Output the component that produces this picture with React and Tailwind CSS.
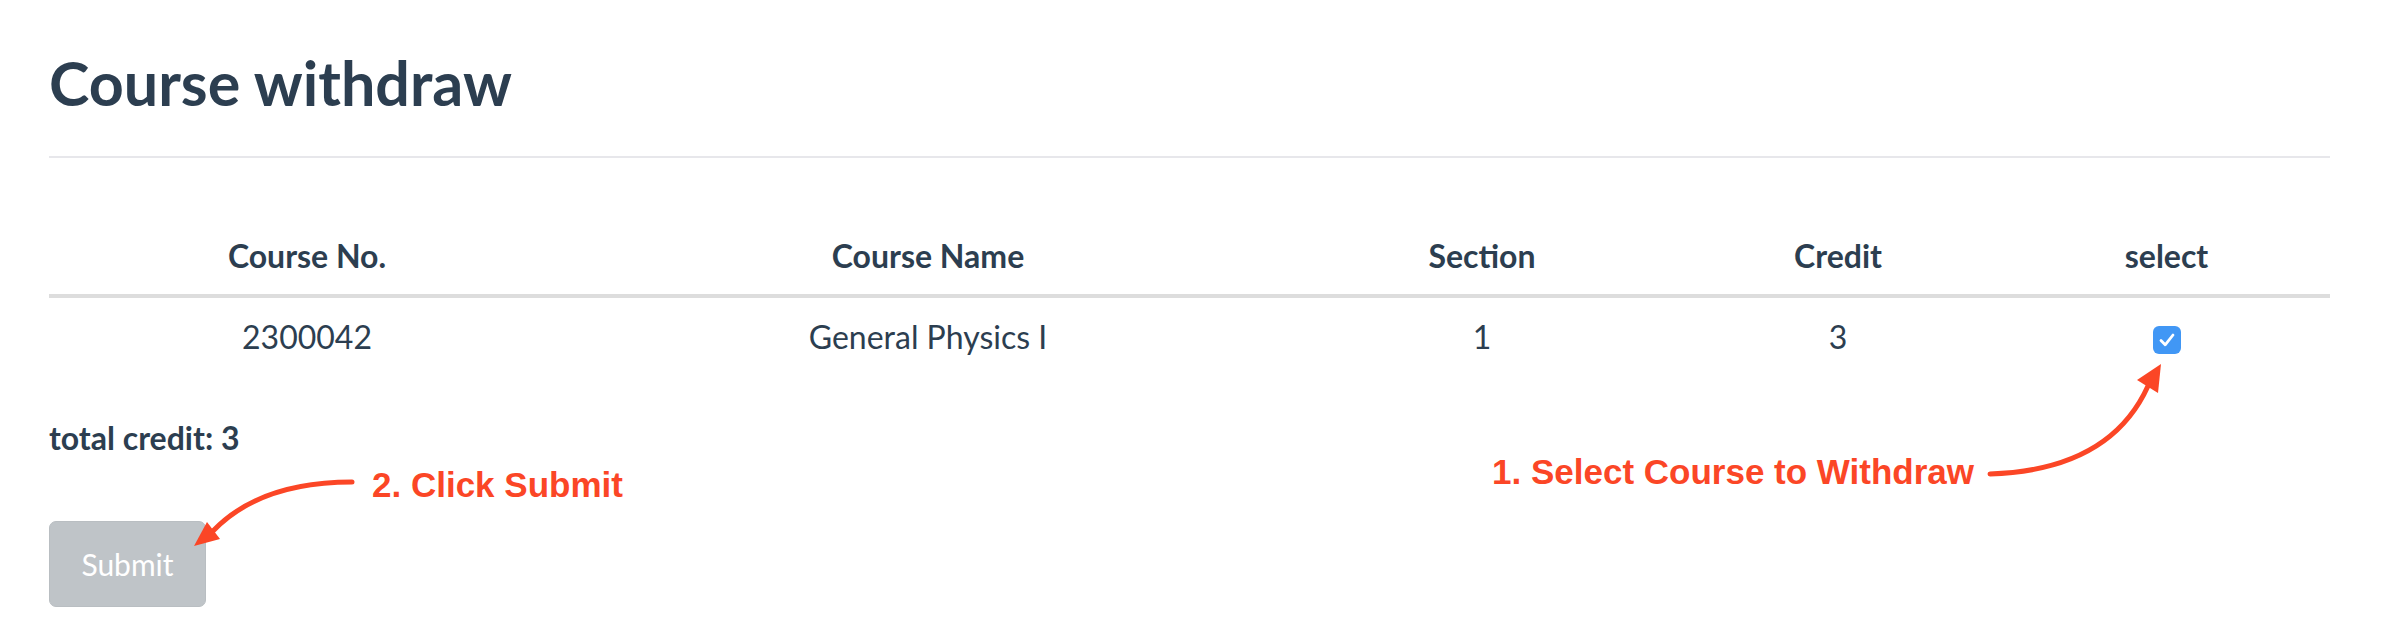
import React from 'react';

const columns = [
  { label: 'Course No.', width: 'w-[516px]' },
  { label: 'Course Name', width: 'w-[726px]' },
  { label: 'Section', width: 'w-[382px]' },
  { label: 'Credit', width: 'w-[330px]' },
  { label: 'select', width: 'w-[327px]' },
];

const rows = [{ no: '2300042', name: 'General Physics I', section: '1', credit: '3', selected: true }];

const Checkbox = ({ checked }) => (
  <div className="inline-flex w-[28px] h-[28px] rounded-[6px] bg-[#4197f5] items-center justify-center align-middle">
    {checked && (
      <svg width="20" height="20" viewBox="0 0 20 20" fill="none">
        <path d="M4 10.5 L8.2 14.8 L16 5" stroke="white" strokeWidth="2.8" strokeLinecap="round" strokeLinejoin="round" />
      </svg>
    )}
  </div>
);

const App = () => {
  const totalCredit = rows.filter((r) => r.selected).reduce((sum, r) => sum + Number(r.credit), 0);

  return (
    <div className="relative w-[2408px] h-[636px] bg-white overflow-hidden text-[#2c3e50] font-['Lato',sans-serif]">
      <div className="pl-[49px] pt-[52px] w-[2330px]">
        <h1 className="text-[61px] leading-[61px] font-bold">Course withdraw</h1>
        <div className="mt-[43px] h-[2px] bg-[#e7e7eb]" />

        <table className="mt-[82px] table-fixed border-collapse">
          <thead>
            <tr className="border-b-4 border-[#dddddd]">
              {columns.map((c) => (
                <th key={c.label} className={`${c.width} pb-[22px] text-[32px] leading-[32px] font-bold text-center`}>
                  {c.label}
                </th>
              ))}
            </tr>
          </thead>
          <tbody>
            {rows.map((r) => (
              <tr key={r.no} className="text-[32px] leading-[32px] text-center">
                <td className="pt-[22px]">{r.no}</td>
                <td className="pt-[22px]">{r.name}</td>
                <td className="pt-[22px]">{r.section}</td>
                <td className="pt-[22px]">{r.credit}</td>
                <td className="pt-[22px]">
                  <Checkbox checked={r.selected} />
                </td>
              </tr>
            ))}
          </tbody>
        </table>

        <p className="mt-[68px] text-[32px] leading-[32px] font-bold">total credit: {totalCredit}</p>

        <button className="mt-[67px] w-[157px] h-[86px] rounded-[7px] bg-[#bfc4c8] border border-[#b9bec2] text-white text-[30px] leading-[30px] flex items-center justify-center">
          Submit
        </button>
      </div>

      {/* annotations */}
      <svg className="absolute inset-0 pointer-events-none" width="2408" height="636" viewBox="0 0 2408 636">
        <path d="M1990 474 Q 2110 470 2148 386" stroke="#fb4626" strokeWidth="5" fill="none" strokeLinecap="round" />
        <polygon points="2161,364 2137,380 2158,393" fill="#fb4626" />
        <path d="M352 482 Q 260 482 213 531" stroke="#fb4626" strokeWidth="5" fill="none" strokeLinecap="round" />
        <polygon points="194,546 207,522 220,539" fill="#fb4626" />
      </svg>
      <span className="absolute left-[372px] top-[467px] text-[35px] leading-[35px] font-bold text-[#fb4626] font-['Liberation_Sans',Arial,sans-serif]">
        2. Click Submit
      </span>
      <span className="absolute left-[1492px] top-[454px] text-[35px] leading-[35px] font-bold text-[#fb4626] font-['Liberation_Sans',Arial,sans-serif]">
        1. Select Course to Withdraw
      </span>
    </div>
  );
};

export default App;
